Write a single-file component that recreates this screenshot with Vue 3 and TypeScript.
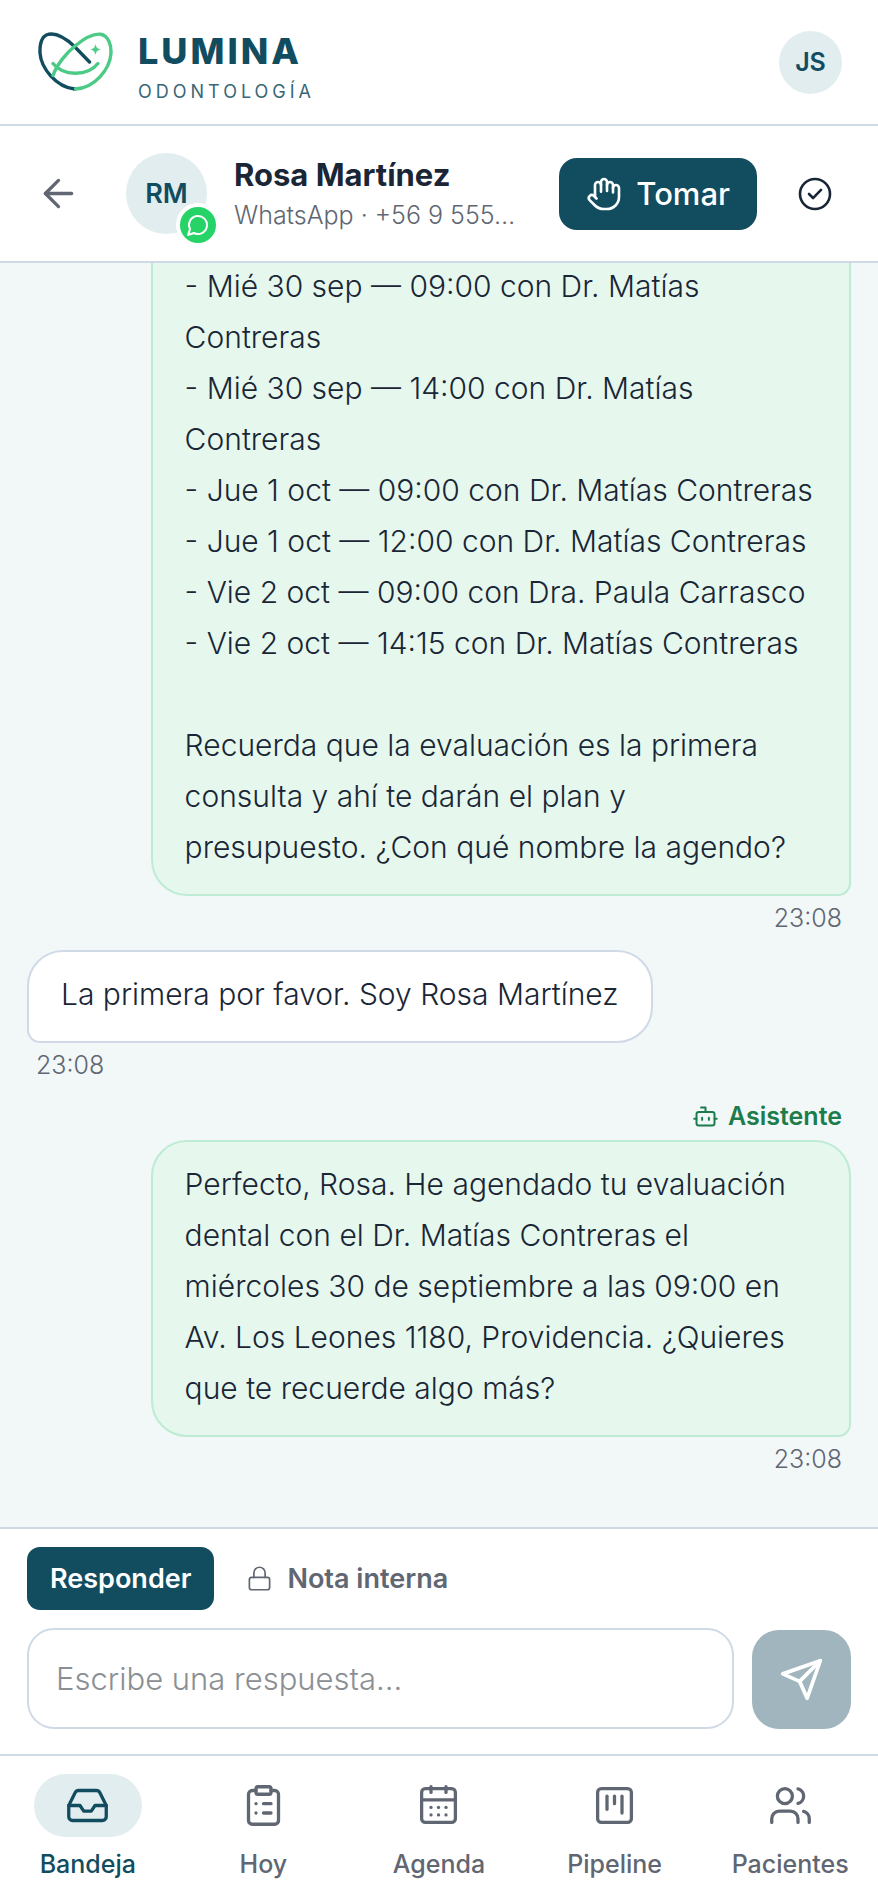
<script setup lang="ts">
import { ref } from 'vue'

interface Message {
  id: number
  author: 'assistant' | 'patient'
  text: string
  time: string
  continued?: boolean
}

interface NavItem {
  label: string
  paths: string[]
  active?: boolean
}

const messages: Message[] = [
  {
    id: 1,
    author: 'assistant',
    continued: true,
    time: '23:08',
    text: [
      '- Mié 30 sep — 09:00 con Dr. Matías Contreras',
      '- Mié 30 sep — 14:00 con Dr. Matías Contreras',
      '- Jue 1 oct — 09:00 con Dr. Matías Contreras',
      '- Jue 1 oct — 12:00 con Dr. Matías Contreras',
      '- Vie 2 oct — 09:00 con Dra. Paula Carrasco',
      '- Vie 2 oct — 14:15 con Dr. Matías Contreras',
      '',
      'Recuerda que la evaluación es la primera consulta y ahí te darán el plan y',
      'presupuesto. ¿Con qué nombre la agendo?',
    ].join('\n'),
  },
  { id: 2, author: 'patient', time: '23:08', text: 'La primera por favor. Soy Rosa Martínez' },
  {
    id: 3,
    author: 'assistant',
    time: '23:08',
    text: 'Perfecto, Rosa. He agendado tu evaluación dental con el Dr. Matías Contreras el miércoles 30 de septiembre a las 09:00 en Av. Los Leones 1180, Providencia. ¿Quieres que te recuerde algo más?',
  },
]

const navItems: NavItem[] = [
  {
    label: 'Bandeja',
    active: true,
    paths: [
      'M22 12h-6l-2 3h-4l-2-3H2',
      'M5.45 5.11 2 12v6a2 2 0 0 0 2 2h16a2 2 0 0 0 2-2v-6l-3.45-6.89A2 2 0 0 0 16.76 4H7.24a2 2 0 0 0-1.79 1.11z',
    ],
  },
  {
    label: 'Hoy',
    paths: [
      'M9 2h6a1 1 0 0 1 1 1v2a1 1 0 0 1-1 1H9a1 1 0 0 1-1-1V3a1 1 0 0 1 1-1z',
      'M16 4h2a2 2 0 0 1 2 2v14a2 2 0 0 1-2 2H6a2 2 0 0 1-2-2V6a2 2 0 0 1 2-2h2',
      'M12 11h4',
      'M12 16h4',
      'M8 11h.01',
      'M8 16h.01',
    ],
  },
  {
    label: 'Agenda',
    paths: [
      'M5 3h14a2 2 0 0 1 2 2v14a2 2 0 0 1-2 2H5a2 2 0 0 1-2-2V5a2 2 0 0 1 2-2z',
      'M8 2v3',
      'M16 2v3',
      'M3 9h18',
      'M8 13h.01',
      'M12 13h.01',
      'M16 13h.01',
      'M8 17h.01',
      'M12 17h.01',
      'M16 17h.01',
    ],
  },
  {
    label: 'Pipeline',
    paths: [
      'M5 3h14a2 2 0 0 1 2 2v14a2 2 0 0 1-2 2H5a2 2 0 0 1-2-2V5a2 2 0 0 1 2-2z',
      'M8 7v7',
      'M12 7v4',
      'M16 7v9',
    ],
  },
  {
    label: 'Pacientes',
    paths: [
      'M16 21v-2a4 4 0 0 0-4-4H6a4 4 0 0 0-4 4v2',
      'M13 7a4 4 0 1 1-8 0a4 4 0 1 1 8 0z',
      'M22 21v-2a4 4 0 0 0-3-3.87',
      'M16 3.13a4 4 0 0 1 0 7.75',
    ],
  },
]

const mode = ref<'reply' | 'note'>('reply')
const draft = ref('')
</script>

<template>
  <div class="app">
    <header class="topbar">
      <a class="brand" href="#" aria-label="Lumina Odontología">
        <svg class="brand-mark" viewBox="0 0 76 60" fill="none" stroke-width="3.4" stroke-linecap="round" aria-hidden="true">
          <path d="M51.500 30L36.500 14.500C28 6.500 18 1 11 2.200C4 3.600 1.700 12 2 21C3 36 18 55 36.500 57" stroke="#124c5f" />
          <path d="M15 43.500C19 32 29 20.500 37 14C46 6.500 55 1.500 62.500 2.200C70.500 3.400 73.200 13 73 21C72 37 57 56 37.500 57" stroke="#4bcb86" />
          <path d="M15 31.500C25 44 49 45 60 31.500" stroke="#4bcb86" />
          <path d="M57.500 12C58.300 15.700 59.300 16.700 63 17.500C59.300 18.300 58.300 19.300 57.500 23C56.700 19.300 55.700 18.300 52 17.500C55.700 16.700 56.700 15.700 57.500 12Z" fill="#4bcb86" />
        </svg>
        <span class="brand-text">
          <span class="brand-name">LUMINA</span>
          <span class="brand-sub">ODONTOLOGÍA</span>
        </span>
      </a>
      <button class="user" type="button" aria-label="Cuenta">JS</button>
    </header>

    <section class="contact">
      <button class="square-btn back" type="button" aria-label="Volver">
        <svg class="icon-lg" viewBox="0 0 24 24"><path d="m12 19-7-7 7-7" /><path d="M19 12H5" /></svg>
      </button>
      <div class="avatar">
        RM
        <span class="channel">
          <svg viewBox="0 0 24 24"><path d="M7.900 20A9 9 0 1 0 4 16.100L2 22Z" /></svg>
        </span>
      </div>
      <div class="who">
        <h1>Rosa Martínez</h1>
        <p>WhatsApp · +56 9 555…</p>
      </div>
      <button class="take" type="button">
        <svg class="icon-md" viewBox="0 0 24 24">
          <path d="M18 11V6a2 2 0 0 0-4 0" />
          <path d="M14 10V4a2 2 0 0 0-4 0v2" />
          <path d="M10 10.500V6a2 2 0 0 0-4 0v8" />
          <path d="M18 8a2 2 0 1 1 4 0v6a8 8 0 0 1-8 8h-2c-2.800 0-4.500-.86-5.990-2.340l-3.600-3.600a2 2 0 0 1 2.830-2.820L7 15" />
        </svg>
        Tomar
      </button>
      <button class="square-btn" type="button" aria-label="Resolver">
        <svg class="icon-md" viewBox="0 0 24 24"><circle cx="12" cy="12" r="10" /><path d="m8 12 2.700 2.700L16 9.300" /></svg>
      </button>
    </section>

    <main class="chat">
      <article v-for="m in messages" :key="m.id" class="message" :class="[m.author, { continued: m.continued }]">
        <div v-if="m.author === 'assistant' && !m.continued" class="author">
          <svg class="icon-sm" viewBox="0 0 24 24">
            <path d="M12 8V4H8" />
            <rect x="4" y="8" width="16" height="12" rx="2" />
            <path d="M2 14h2M20 14h2M15 13v2M9 13v2" />
          </svg>
          Asistente
        </div>
        <p class="bubble">{{ m.text }}</p>
        <time class="time">{{ m.time }}</time>
      </article>
    </main>

    <form class="composer" @submit.prevent>
      <div class="modes">
        <button type="button" class="mode" :class="{ on: mode === 'reply' }" @click="mode = 'reply'">Responder</button>
        <button type="button" class="mode" :class="{ on: mode === 'note' }" @click="mode = 'note'">
          <svg class="icon-sm thin" viewBox="0 0 24 24">
            <rect x="3" y="11" width="18" height="11" rx="2" />
            <path d="M7 11V7a5 5 0 0 1 10 0v4" />
          </svg>
          Nota interna
        </button>
      </div>
      <div class="entry">
        <input v-model="draft" type="text" placeholder="Escribe una respuesta…" aria-label="Escribe una respuesta" />
        <button class="send" type="submit" aria-label="Enviar" :disabled="!draft">
          <svg class="icon-lg" viewBox="0 0 24 24"><path d="m22 2-7 20-4-9-9-4Z" /><path d="M22 2 11 13" /></svg>
        </button>
      </div>
    </form>

    <nav class="tabs" aria-label="Principal">
      <a v-for="item in navItems" :key="item.label" href="#" class="tab" :class="{ active: item.active }">
        <span class="pill">
          <svg class="icon-lg" viewBox="0 0 24 24"><path v-for="d in item.paths" :key="d" :d="d" /></svg>
        </span>
        {{ item.label }}
      </a>
    </nav>
  </div>
</template>

<style>
body {
  margin: 0;
}
</style>

<style scoped>
.app {
  --primary: #124c5f;
  --tint: #e2edf0;
  --ink: #1a2636;
  --muted: #606672;
  --line: #cfdae6;
  display: flex;
  flex-direction: column;
  height: 100vh;
  background: #fff;
  color: var(--ink);
  font-family: Inter, "Open Sans", sans-serif;
  font-size: 30px;
}

.app * {
  box-sizing: border-box;
}

button,
input {
  font: inherit;
  border: 0;
  margin: 0;
  padding: 0;
}

a {
  color: inherit;
  text-decoration: none;
}

h1,
p {
  margin: 0;
}

svg {
  flex: none;
  display: block;
}

svg:not(.brand-mark) {
  fill: none;
  stroke: currentColor;
  stroke-width: 1.75;
  stroke-linecap: round;
  stroke-linejoin: round;
}

.icon-sm {
  width: 27px;
  height: 27px;
}

.icon-md {
  width: 36px;
  height: 36px;
}

.icon-lg {
  width: 45px;
  height: 45px;
}

svg.thin {
  stroke-width: 1.5;
}

.topbar {
  display: flex;
  align-items: center;
  justify-content: space-between;
  height: 126px;
  padding: 0 36px 0 38px;
  border-bottom: 2px solid var(--line);
}

.brand {
  display: flex;
  align-items: center;
  gap: 24px;
  color: var(--primary);
}

.brand-mark {
  width: 76px;
  height: 60px;
}

.brand-text {
  display: flex;
  flex-direction: column;
  gap: 11px;
  padding-top: 12px;
}

.brand-name {
  font-size: 36px;
  font-weight: 800;
  line-height: 36px;
  letter-spacing: 3px;
}

.brand-sub {
  font-size: 18px;
  line-height: 24px;
  letter-spacing: 4px;
  opacity: 0.85;
}

.user,
.avatar {
  display: flex;
  flex: none;
  align-items: center;
  justify-content: center;
  border-radius: 50%;
  background: var(--tint);
  color: var(--primary);
  font-weight: 600;
}

.user {
  width: 63px;
  height: 63px;
  font-size: 25px;
}

.contact {
  display: flex;
  align-items: center;
  height: 137px;
  padding: 0 27px 0 22px;
  border-bottom: 2px solid var(--line);
}

.square-btn {
  display: flex;
  flex: none;
  align-items: center;
  justify-content: center;
  width: 72px;
  height: 72px;
  background: none;
  color: var(--ink);
}

.back {
  margin-right: 32px;
  color: var(--muted);
}

.avatar {
  position: relative;
  width: 81px;
  height: 81px;
  font-size: 27px;
}

.channel {
  position: absolute;
  right: -13px;
  bottom: -13px;
  display: flex;
  align-items: center;
  justify-content: center;
  width: 44px;
  height: 44px;
  border: 4px solid #fff;
  border-radius: 50%;
  background: #25d366;
  color: #fff;
}

.channel svg {
  width: 24px;
  height: 24px;
  stroke-width: 2;
}

.who {
  flex: 1;
  min-width: 0;
  padding: 0 18px 0 27px;
}

.who h1,
.who p {
  overflow: hidden;
  white-space: nowrap;
  text-overflow: ellipsis;
}

.who h1 {
  font-size: 31px;
  font-weight: 700;
  line-height: 42px;
}

.who p {
  font-size: 25px;
  font-weight: 300;
  line-height: 38px;
  color: var(--muted);
}

.take {
  display: flex;
  flex: none;
  align-items: center;
  justify-content: center;
  gap: 14px;
  height: 72px;
  margin-right: 22px;
  padding: 0 27px;
  border-radius: 18px;
  background: var(--primary);
  color: #fff;
  font-size: 31px;
  font-weight: 500;
}

.chat {
  display: flex;
  flex: 1;
  flex-direction: column;
  justify-content: flex-end;
  gap: 13px;
  min-height: 0;
  overflow: hidden;
  padding: 0 27px 49px;
  background: #f2f7f8;
}

.message {
  display: flex;
  flex: none;
  flex-direction: column;
  align-items: flex-start;
  max-width: 85%;
}

.assistant {
  align-self: flex-end;
  align-items: flex-end;
}

.author {
  display: flex;
  align-items: center;
  gap: 9px;
  margin-bottom: 5px;
  padding: 0 9px;
  color: #1c7c4c;
  font-size: 25px;
  font-weight: 600;
  line-height: 38px;
}

.bubble {
  padding: 17px 32px 21px;
  border: 2px solid var(--line);
  border-radius: 36px 36px 36px 13px;
  background: #fff;
  font-weight: 300;
  line-height: 51px;
  white-space: pre-line;
}

.assistant .bubble {
  border-color: #bdebd3;
  border-radius: 36px 36px 13px 36px;
  background: #e6f8ee;
}

.continued .bubble {
  padding-top: 0;
  border-top: 0;
  border-top-left-radius: 0;
  border-top-right-radius: 0;
}

.time {
  padding: 4px 9px 0;
  color: var(--muted);
  font-size: 25px;
  font-weight: 300;
  line-height: 37px;
}

.composer {
  padding: 18px 27px 25px;
  border-top: 2px solid var(--line);
}

.modes {
  display: flex;
  gap: 9px;
  margin-bottom: 18px;
}

.mode {
  display: flex;
  align-items: center;
  gap: 14px;
  height: 63px;
  padding: 0 23px;
  border-radius: 13px;
  background: none;
  color: var(--muted);
  font-size: 27px;
  font-weight: 600;
}

.mode.on {
  background: var(--primary);
  color: #fff;
}

.entry {
  display: flex;
  align-items: flex-end;
  gap: 18px;
}

.entry input {
  flex: 1;
  min-width: 0;
  height: 101px;
  padding: 0 27px;
  border: 2px solid var(--line);
  border-radius: 27px;
  background: #fff;
  color: var(--ink);
  font-size: 31px;
  font-weight: 300;
}

.entry input::placeholder {
  color: #8b8f94;
  opacity: 1;
}

.send {
  display: flex;
  flex: none;
  align-items: center;
  justify-content: center;
  width: 99px;
  height: 99px;
  border-radius: 27px;
  background: var(--primary);
  color: #fff;
}

.send:disabled {
  background: #a0b5bd;
}

.send svg {
  stroke-width: 2;
}

.tabs {
  display: grid;
  grid-template-columns: repeat(5, 1fr);
  padding: 18px 0;
  border-top: 2px solid var(--line);
}

.tab {
  display: flex;
  flex-direction: column;
  align-items: center;
  gap: 9px;
  color: var(--muted);
  font-size: 25px;
  font-weight: 500;
  line-height: 36px;
}

.pill {
  display: flex;
  align-items: center;
  justify-content: center;
  width: 108px;
  height: 63px;
  border-radius: 32px;
}

.active {
  color: var(--primary);
}

.active .pill {
  background: var(--tint);
}
</style>
